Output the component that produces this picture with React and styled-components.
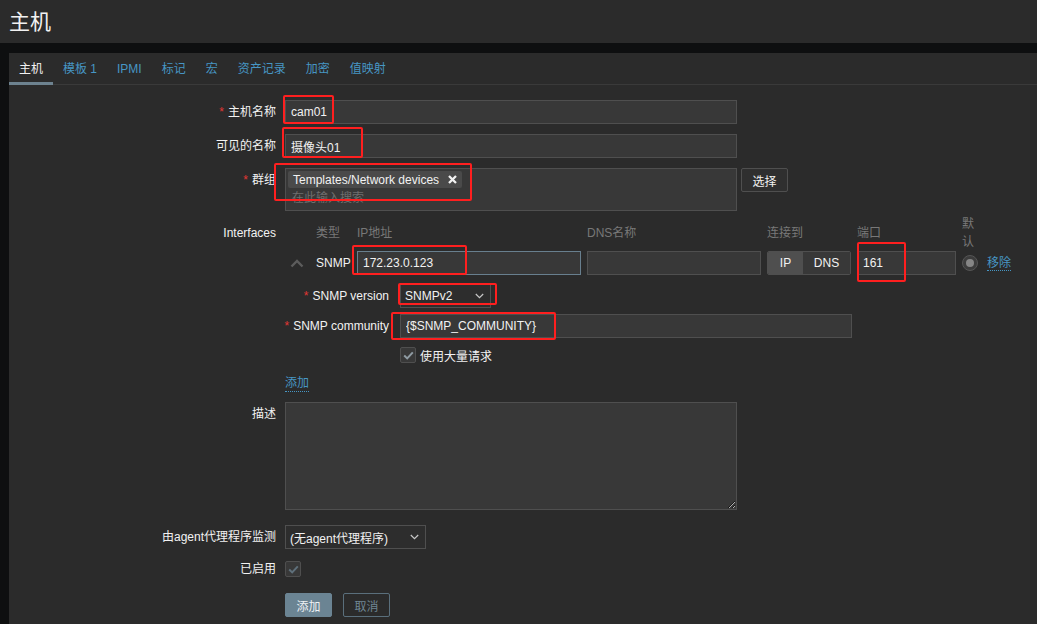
import React from "react";
import styled, { createGlobalStyle, css } from "styled-components";

const GlobalStyle = createGlobalStyle`
  html, body { margin: 0; padding: 0; background: #0e0f10; }
  body {
    font-family: "Liberation Sans", Arial, "Noto Sans CJK SC", sans-serif;
    font-size: 12px;
    color: #f2f2f2;
  }
  *, *::before, *::after { box-sizing: border-box; }
`;

const Page = styled.div`
  position: relative;
  width: 1037px;
  height: 624px;
  overflow: hidden;
  display: flex;
  flex-direction: column;
`;

const Header = styled.header`
  height: 43px;
  flex: none;
  background: #2b2b2b;
  display: flex;
  align-items: center;
  padding: 0 9px 2px;
`;

const Title = styled.h1`
  margin: 0;
  font-size: 21px;
  font-weight: normal;
  line-height: 1;
  color: #f2f2f2;
  font-family: "Noto Sans CJK SC", sans-serif;
`;

const Main = styled.main`
  flex: 1;
  padding: 10px 0 0 9px;
  display: flex;
`;

const Panel = styled.section`
  flex: 1;
  background: #2b2b2b;
`;

const TabBar = styled.nav`
  display: flex;
  height: 32px;
  box-shadow: inset 0 -1px 0 #3a3a3a;
`;

const Tab = styled.div`
  height: 32px;
  padding: 4px 10px 0;
  line-height: 25px;
  color: ${(p) => (p.$active ? "#f2f2f2" : "#4796c4")};
  border-bottom: 3px solid ${(p) => (p.$active ? "#6d828f" : "transparent")};
  white-space: nowrap;
`;

const Form = styled.div`
  padding-top: 15px;
  display: flex;
  flex-direction: column;
`;

const Row = styled.div`
  display: grid;
  grid-template-columns: 276px 1fr;
  margin-top: ${(p) => p.$mt || 0}px;
`;

const Label = styled.div`
  display: flex;
  justify-content: flex-end;
  padding-right: 9px;
  padding-top: ${(p) => p.$pt || 0}px;
  line-height: 24px;
  white-space: nowrap;
`;

const Req = styled.span`
  color: #e33734;
  margin-right: 4px;
`;

const Field = styled.div`
  display: flex;
  align-items: flex-start;
  min-width: 0;
`;

const Column = styled.div`
  display: flex;
  flex-direction: column;
  align-items: flex-start;
  min-width: 0;
`;

const Input = styled.input`
  width: ${(p) => (p.$w ? `${p.$w}px` : "100%")};
  height: 24px;
  margin: 0;
  padding: 0 5px;
  background: #383838;
  border: 1px solid ${(p) => (p.$focus ? "#687f8e" : "#4f4f4f")};
  border-radius: 0;
  color: #f2f2f2;
  font: inherit;
  outline: none;
`;

const MultiSelect = styled.div`
  width: 452px;
  height: 43px;
  padding: 2px;
  background: #383838;
  border: 1px solid #4f4f4f;
  display: flex;
  flex-direction: column;
  align-items: flex-start;
`;

const Chip = styled.span`
  display: inline-flex;
  align-items: center;
  gap: 9px;
  height: 17px;
  padding: 0 5px;
  background: #4a4a4a;
  border-radius: 2px;
  white-space: nowrap;
`;

const Placeholder = styled.span`
  color: #6e6e6e;
  padding-left: 4px;
  line-height: 20px;
`;

const Button = styled.button`
  height: 24px;
  width: 47px;
  padding: 0;
  font: inherit;
  border-radius: 2px;
  cursor: pointer;
  ${(p) =>
    p.$variant === "primary"
      ? css`
          background: #6b8493;
          border: 1px solid #6b8493;
          color: #eef1f3;
        `
      : p.$variant === "outline"
      ? css`
          background: transparent;
          border: 1px solid #5a6f7c;
          color: #6f8694;
          margin-left: 11px;
        `
      : css`
          background: #2f2f2f;
          border: 1px solid #4f4f4f;
          color: #f2f2f2;
          margin-left: 4px;
        `}
`;

const IfaceGrid = styled.div`
  display: grid;
  grid-template-columns: 25px 35px 224px 174px 84px 99px 19px auto;
  column-gap: 6px;
  align-items: center;
`;

const IfaceHead = styled.div`
  color: #787878;
  line-height: 18px;
`;

const ChevronCell = styled.div`
  display: flex;
  align-items: center;
  padding-left: 5px;
`;

const Toggle = styled.div`
  display: flex;
  height: 24px;
  border: 1px solid #4f4f4f;
  border-radius: 2px;
  overflow: hidden;
`;

const ToggleOpt = styled.div`
  display: flex;
  align-items: center;
  justify-content: center;
  width: ${(p) => p.$w}px;
  background: ${(p) => (p.$on ? "#4f4f4f" : "#383838")};
`;

const Radio = styled.span`
  display: inline-flex;
  align-items: center;
  justify-content: center;
  width: 16px;
  height: 16px;
  border-radius: 50%;
  background: #3c3c3c;
  border: 1px solid #555;
  &::after {
    content: "";
    width: 8px;
    height: 8px;
    border-radius: 50%;
    background: #868686;
  }
`;

const Link = styled.a`
  color: #4796c4;
  text-decoration: none;
  border-bottom: 1px dotted #4796c4;
  line-height: 16px;
  cursor: pointer;
`;

const SubForm = styled.div`
  display: flex;
  flex-direction: column;
  margin-top: 9px;
`;

const SubRow = styled.div`
  display: grid;
  grid-template-columns: 115px 1fr;
  align-items: center;
  margin-top: ${(p) => p.$mt || 0}px;
`;

const SubLabel = styled.div`
  display: flex;
  justify-content: flex-end;
  padding-right: 11px;
  line-height: 24px;
  white-space: nowrap;
`;

const Select = styled.div`
  display: flex;
  align-items: center;
  justify-content: space-between;
  width: ${(p) => p.$w}px;
  height: 24px;
  padding: 0 6px 0 4px;
  background: #2d2d2d;
  border: 1px solid #4f4f4f;
  white-space: nowrap;
`;

const CheckLine = styled.label`
  display: flex;
  align-items: center;
  gap: 4px;
  height: ${(p) => p.$h || 16}px;
`;

const Check = styled.span`
  display: inline-flex;
  align-items: center;
  justify-content: center;
  width: 16px;
  height: 16px;
  background: #383838;
  border: 1px solid #4f4f4f;
  border-radius: 2px;
`;

const AddLink = styled.div`
  margin-top: 12px;
  display: flex;
`;

const TextArea = styled.textarea`
  display: block;
  width: 452px;
  height: 108px;
  margin: 0;
  padding: 4px 5px;
  background: #383838;
  border: 1px solid #4f4f4f;
  color: #f2f2f2;
  font: inherit;
  outline: none;
  resize: vertical;
`;

const Mark = styled.div`
  position: absolute;
  left: ${(p) => p.$x}px;
  top: ${(p) => p.$y}px;
  width: ${(p) => p.$w}px;
  height: ${(p) => p.$h}px;
  border: 2px solid #ff1f1f;
  border-radius: 2px;
  pointer-events: none;
`;

const ChevronDown = () => (
  <svg width="9" height="6" viewBox="0 0 9 6">
    <polyline points="0.8,1 4.5,4.6 8.2,1" fill="none" stroke="#c8c8c8" strokeWidth="1.2" />
  </svg>
);

const ChevronUp = () => (
  <svg width="14" height="9" viewBox="0 0 14 9">
    <polyline points="1.5,7.5 7,2 12.5,7.5" fill="none" stroke="#5c5c5c" strokeWidth="2.4" />
  </svg>
);

const RemoveX = () => (
  <svg width="9" height="9" viewBox="0 0 9 9">
    <path d="M1 1 L8 8 M8 1 L1 8" stroke="#f2f2f2" strokeWidth="2.3" strokeLinecap="butt" />
  </svg>
);

const Tick = ({ color }) => (
  <svg width="11" height="9" viewBox="0 0 11 9">
    <polyline points="1.2,4.6 4.2,7.4 9.8,1.4" fill="none" stroke={color} strokeWidth="2" />
  </svg>
);

const tabs = ["主机", "模板 1", "IPMI", "标记", "宏", "资产记录", "加密", "值映射"];

const marks = [
  { x: 283, y: 95, w: 51, h: 29 },
  { x: 282, y: 127, w: 81, h: 31 },
  { x: 274, y: 163, w: 198, h: 38 },
  { x: 352, y: 245, w: 115, h: 30 },
  { x: 398, y: 283, w: 99, h: 22 },
  { x: 391, y: 312, w: 165, h: 28 },
  { x: 857, y: 242, w: 49, h: 40 },
];

export default function App() {
  return (
    <>
      <GlobalStyle />
      <Page>
        <Header>
          <Title>主机</Title>
        </Header>
        <Main>
          <Panel>
            <TabBar>
              {tabs.map((t, i) => (
                <Tab key={t} $active={i === 0}>
                  {t}
                </Tab>
              ))}
            </TabBar>
            <Form>
              <Row>
                <Label>
                  <Req>*</Req>主机名称
                </Label>
                <Field>
                  <Input $w={452} defaultValue="cam01" />
                </Field>
              </Row>
              <Row $mt={10}>
                <Label>可见的名称</Label>
                <Field>
                  <Input $w={452} defaultValue="摄像头01" />
                </Field>
              </Row>
              <Row $mt={10}>
                <Label>
                  <Req>*</Req>群组
                </Label>
                <Field>
                  <MultiSelect>
                    <Chip>
                      Templates/Network devices
                      <RemoveX />
                    </Chip>
                    <Placeholder>在此输入搜索</Placeholder>
                  </MultiSelect>
                  <Button>选择</Button>
                </Field>
              </Row>
              <Row $mt={4}>
                <Label $pt={6}>Interfaces</Label>
                <Column>
                  <IfaceGrid>
                    <span />
                    <IfaceHead>类型</IfaceHead>
                    <IfaceHead>IP地址</IfaceHead>
                    <IfaceHead>DNS名称</IfaceHead>
                    <IfaceHead>连接到</IfaceHead>
                    <IfaceHead>端口</IfaceHead>
                    <IfaceHead>默认</IfaceHead>
                    <span />

                    <ChevronCell>
                      <ChevronUp />
                    </ChevronCell>
                    <span>SNMP</span>
                    <Input $focus defaultValue="172.23.0.123" />
                    <Input defaultValue="" />
                    <Toggle>
                      <ToggleOpt $w={35} $on>
                        IP
                      </ToggleOpt>
                      <ToggleOpt $w={47}>DNS</ToggleOpt>
                    </Toggle>
                    <Input defaultValue="161" />
                    <Radio />
                    <div>
                      <Link>移除</Link>
                    </div>
                  </IfaceGrid>
                  <SubForm>
                    <SubRow>
                      <SubLabel>
                        <Req>*</Req>SNMP version
                      </SubLabel>
                      <div>
                        <Select $w={91}>
                          SNMPv2
                          <ChevronDown />
                        </Select>
                      </div>
                    </SubRow>
                    <SubRow $mt={6}>
                      <SubLabel>
                        <Req>*</Req>SNMP community
                      </SubLabel>
                      <div>
                        <Input $w={452} defaultValue="{$SNMP_COMMUNITY}" />
                      </div>
                    </SubRow>
                    <SubRow $mt={9}>
                      <span />
                      <CheckLine>
                        <Check>
                          <Tick color="#8f9ba3" />
                        </Check>
                        使用大量请求
                      </CheckLine>
                    </SubRow>
                  </SubForm>
                  <AddLink>
                    <Link>添加</Link>
                  </AddLink>
                </Column>
              </Row>
              <Row $mt={10}>
                <Label>描述</Label>
                <Field>
                  <TextArea defaultValue="" />
                </Field>
              </Row>
              <Row $mt={15}>
                <Label>由agent代理程序监测</Label>
                <Field>
                  <Select $w={141}>
                    (无agent代理程序)
                    <ChevronDown />
                  </Select>
                </Field>
              </Row>
              <Row $mt={8}>
                <Label>已启用</Label>
                <Field>
                  <CheckLine $h={24}>
                    <Check>
                      <Tick color="#5f707b" />
                    </Check>
                  </CheckLine>
                </Field>
              </Row>
              <Row $mt={12}>
                <span />
                <Field>
                  <Button $variant="primary">添加</Button>
                  <Button $variant="outline">取消</Button>
                </Field>
              </Row>
            </Form>
          </Panel>
        </Main>
        {marks.map((m, i) => (
          <Mark key={i} $x={m.x} $y={m.y} $w={m.w} $h={m.h} />
        ))}
      </Page>
    </>
  );
}
